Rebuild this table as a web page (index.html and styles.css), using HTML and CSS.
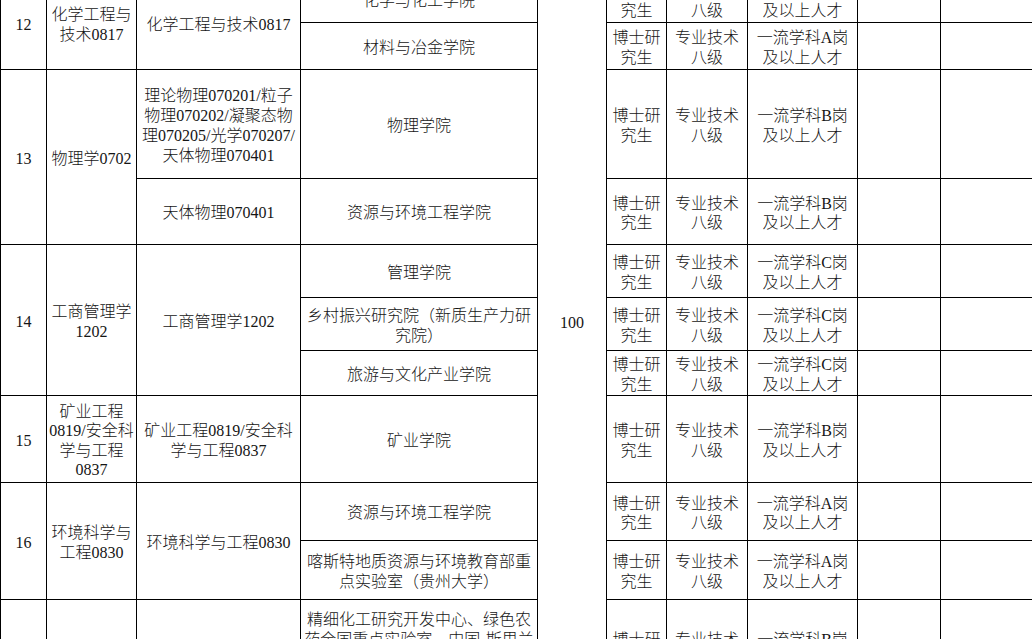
FILE: index.html
```html
<!DOCTYPE html>
<html lang="zh-CN">
<head>
<meta charset="utf-8">
<title>岗位表</title>
<link rel="stylesheet" href="styles.css">
</head>
<body>
<div class="sheet">
<table class="grid">
  <colgroup>
    <col class="w-no"><col class="w-disc"><col class="w-sub"><col class="w-unit"><col class="w-total">
    <col class="w-edu"><col class="w-level"><col class="w-post"><col class="w-e1"><col class="w-e2">
  </colgroup>
  <tbody>
    <tr class="h46">
      <td rowspan="2">12</td>
      <td rowspan="2">化学工程与<br>技术0817</td>
      <td rowspan="2">化学工程与技术0817</td>
      <td>化学与化工学院</td>
      <td rowspan="11" class="total">100</td>
      <td>博士研<br>究生</td><td>专业技术<br>八级</td><td>一流学科A岗<br>及以上人才</td><td></td><td></td>
    </tr>
    <tr class="h47">
      <td>材料与冶金学院</td>
      <td>博士研<br>究生</td><td>专业技术<br>八级</td><td>一流学科A岗<br>及以上人才</td><td></td><td></td>
    </tr>
    <tr class="h109">
      <td rowspan="2">13</td>
      <td rowspan="2">物理学0702</td>
      <td class="lh20">理论物理070201/粒子<br>物理070202/凝聚态物<br>理070205/光学070207/<br>天体物理070401</td>
      <td>物理学院</td>
      <td>博士研<br>究生</td><td>专业技术<br>八级</td><td>一流学科B岗<br>及以上人才</td><td></td><td></td>
    </tr>
    <tr class="h66">
      <td>天体物理070401</td>
      <td>资源与环境工程学院</td>
      <td>博士研<br>究生</td><td>专业技术<br>八级</td><td>一流学科B岗<br>及以上人才</td><td></td><td></td>
    </tr>
    <tr class="h53">
      <td rowspan="3">14</td>
      <td rowspan="3">工商管理学<br>1202</td>
      <td rowspan="3">工商管理学1202</td>
      <td>管理学院</td>
      <td>博士研<br>究生</td><td>专业技术<br>八级</td><td>一流学科C岗<br>及以上人才</td><td></td><td></td>
    </tr>
    <tr class="h53">
      <td>乡村振兴研究院（新质生产力研<br>究院）</td>
      <td>博士研<br>究生</td><td>专业技术<br>八级</td><td>一流学科C岗<br>及以上人才</td><td></td><td></td>
    </tr>
    <tr class="h45">
      <td>旅游与文化产业学院</td>
      <td>博士研<br>究生</td><td>专业技术<br>八级</td><td>一流学科C岗<br>及以上人才</td><td></td><td></td>
    </tr>
    <tr class="h87">
      <td>15</td>
      <td>矿业工程<br>0819/安全科<br>学与工程<br>0837</td>
      <td class="lh20">矿业工程0819/安全科<br>学与工程0837</td>
      <td>矿业学院</td>
      <td>博士研<br>究生</td><td>专业技术<br>八级</td><td>一流学科B岗<br>及以上人才</td><td></td><td></td>
    </tr>
    <tr class="h58">
      <td rowspan="2">16</td>
      <td rowspan="2">环境科学与<br>工程0830</td>
      <td rowspan="2">环境科学与工程0830</td>
      <td>资源与环境工程学院</td>
      <td>博士研<br>究生</td><td>专业技术<br>八级</td><td>一流学科A岗<br>及以上人才</td><td></td><td></td>
    </tr>
    <tr class="h59">
      <td>喀斯特地质资源与环境教育部重<br>点实验室（贵州大学）</td>
      <td>博士研<br>究生</td><td>专业技术<br>八级</td><td>一流学科A岗<br>及以上人才</td><td></td><td></td>
    </tr>
    <tr class="h96">
      <td rowspan="2">17</td>
      <td rowspan="2">化学0703</td>
      <td rowspan="2">化学0703</td>
      <td class="lh20">精细化工研究开发中心、绿色农<br>药全国重点实验室、中国-斯里兰<br>卡天然产物联合实验室、贵州省<br>绿色农药工程技术研究中心</td>
      <td>博士研<br>究生</td><td>专业技术<br>八级</td><td>一流学科B岗<br>及以上人才</td><td></td><td></td>
    </tr>
    <tr class="h60">
      <td>化学与化工学院</td>
      <td></td>
      <td>博士研<br>究生</td><td>专业技术<br>八级</td><td>一流学科B岗<br>及以上人才</td><td></td><td></td>
    </tr>
  </tbody>
</table>
</div>
</body>
</html>
```

FILE: styles.css
```css
html, body {
  margin: 0;
  padding: 0;
  background: #ffffff;
  overflow: hidden;
  height: 100%;
}

.sheet {
  margin-top: -24px;
}

.grid {
  border-collapse: collapse;
  table-layout: fixed;
  width: 1032px;
  font-family: "Liberation Serif", "Noto Sans CJK SC", serif;
  font-size: 16px;
  font-weight: 300;
  color: #151515;
}

.grid td {
  border: 1px solid #000;
  text-align: center;
  vertical-align: middle;
  padding: 3px 2px 0 2px;
  line-height: 19.5px;
  white-space: nowrap;
  overflow: hidden;
}

.grid td.lh20 {
  line-height: 20px;
  padding-top: 4px;
}

.grid td.total {
  padding-top: 0;
  padding-bottom: 27px;
}

.w-no { width: 46px; }
.w-disc { width: 90px; }
.w-sub { width: 164px; }
.w-unit { width: 237px; }
.w-total { width: 69px; }
.w-edu { width: 60px; }
.w-level { width: 81px; }
.w-post { width: 110px; }
.w-e1 { width: 83px; }
.w-e2 { width: 92px; }

.h46 { height: 46px; }
.h47 { height: 47px; }
.h109 { height: 109px; }
.h66 { height: 66px; }
.h53 { height: 53px; }
.h45 { height: 45px; }
.h87 { height: 87px; }
.h58 { height: 58px; }
.h59 { height: 59px; }
.h96 { height: 96px; }
.h60 { height: 60px; }
```
